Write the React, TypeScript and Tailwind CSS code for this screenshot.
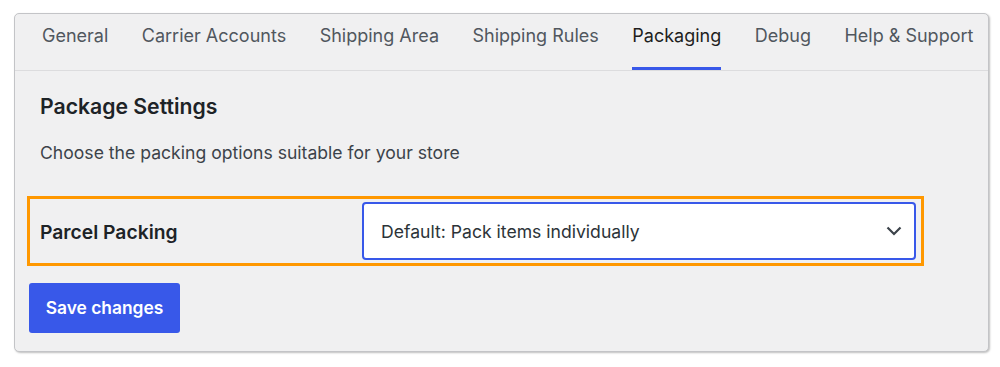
import React from "react";

const tabs = ["General", "Carrier Accounts", "Shipping Area", "Shipping Rules", "Packaging", "Debug", "Help & Support"];

export default function App() {
  return (
    <div className="w-[1000px] h-[367px] bg-white pt-[13px] pl-[14px]" style={{ fontFamily: "Inter, 'Noto Sans', sans-serif" }}>
      <div className="w-[975px] h-[339px] bg-[#f0f0f1] rounded-[5px] border border-[#c3c4c7] shadow-[1px_1px_2px_rgba(0,0,0,0.25)] flex flex-col">
        <div className="h-[57px] border-b border-[#dcdcde] flex pl-[27px] gap-[33.5px]">
          {tabs.map((t) => {
            const active = t === "Packaging";
            return (
              <div
                key={t}
                className={
                  "h-full flex items-center text-[18px] border-b-[3px] -mb-px " +
                  (active ? "text-[#1e1e1e] border-[#3858e9]" : "text-[#50575e] border-transparent")
                }
              >
                <span className="-mt-[11px]">{t}</span>
              </div>
            );
          })}
        </div>
        <div className="pl-[12px] flex flex-col">
          <h2 className="ml-[13px] mt-[21px] text-[21.2px] font-semibold text-[#1d2327] leading-[28px]">Package Settings</h2>
          <p className="ml-[13px] mt-[21px] text-[17.6px] text-[#3c434a] leading-[24px]">Choose the packing options suitable for your store</p>
          <div className="mt-[31px] w-[897px] border-[3px] border-[#ff9800] flex items-center py-[3px] pr-[5px]">
            <div className="w-[332px] pl-[10px] text-[19.3px] font-semibold text-[#1d2327] pt-[2px]">Parcel Packing</div>
            <div className="flex-1 h-[58px] bg-white border-2 border-[#3858e9] rounded-[4px] flex items-center justify-between pl-[17px] pr-[12px]">
              <span className="text-[17.6px] text-[#2c3338] pt-[3px]">Default: Pack items individually</span>
              <svg width="16" height="10" viewBox="0 0 16 10" fill="none">
                <path d="M1.5 1.5 L8 8 L14.5 1.5" stroke="#3c434a" strokeWidth="2.2" />
              </svg>
            </div>
          </div>
          <button className="mt-[17px] ml-[2px] w-[151px] h-[50px] bg-[#3858e9] rounded-[3px] text-white text-[17.4px] font-semibold">Save changes</button>
        </div>
      </div>
    </div>
  );
}
